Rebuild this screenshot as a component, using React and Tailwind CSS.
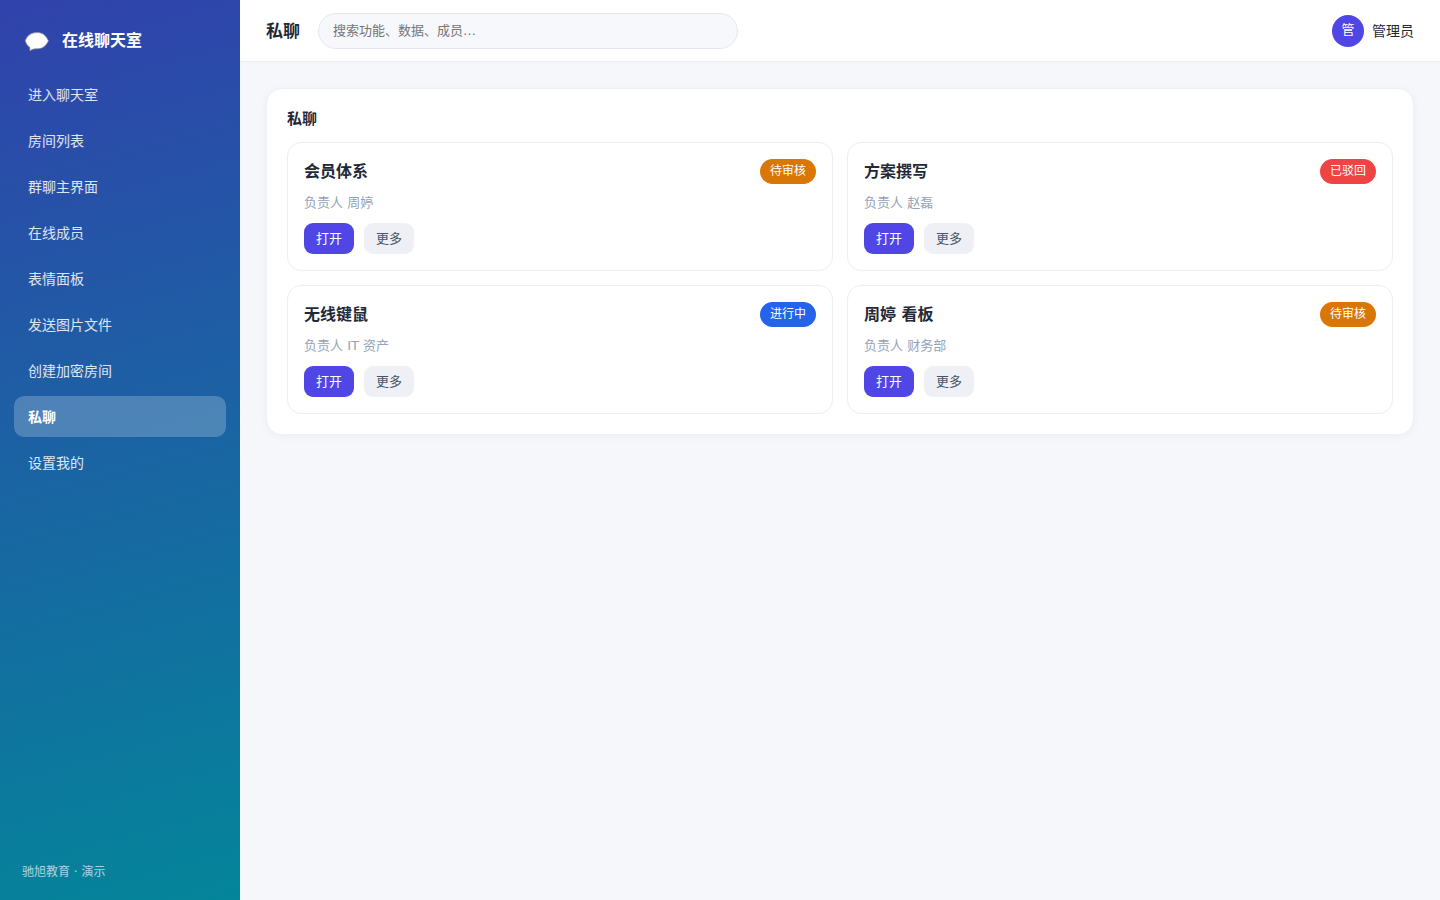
import React from "react";

const navItems = [
  "进入聊天室",
  "房间列表",
  "群聊主界面",
  "在线成员",
  "表情面板",
  "发送图片文件",
  "创建加密房间",
  "私聊",
  "设置我的",
];

const chats = [
  { title: "会员体系", owner: "周婷", status: "待审核" },
  { title: "方案撰写", owner: "赵磊", status: "已驳回" },
  { title: "无线键鼠", owner: "IT 资产", status: "进行中" },
  { title: "周婷 看板", owner: "财务部", status: "待审核" },
];

const statusColors = {
  待审核: "bg-[#d97706]",
  已驳回: "bg-[#ef4444]",
  进行中: "bg-[#2563eb]",
};

function ChatBubbleIcon() {
  return (
    <svg width="26" height="22" viewBox="0 0 26 22" aria-hidden="true">
      <path
        d="M13 2.6C18.2 2.6 21.4 4.6 24.4 10.8C21.8 16.4 18.4 18.8 13 18.8C11.2 18.8 8 18.9 6 20.9L5.8 17.4C3.4 15.8 2.2 13.8 1.2 10.8C3.4 5 7.6 2.6 13 2.6Z"
        fill="#fff"
        stroke="#8a8f98"
        strokeWidth="0.8"
      />
    </svg>
  );
}

function Sidebar({ active }) {
  return (
    <aside className="flex w-60 shrink-0 flex-col bg-[linear-gradient(165deg,#3142ac,#04859a)] px-[14px] pt-[25px] pb-[18px] text-white">
      <div className="flex h-8 items-center gap-3 px-[10px] text-base font-bold">
        <ChatBubbleIcon />
        <span>在线聊天室</span>
      </div>
      <nav className="mt-[17px] flex flex-1 flex-col gap-[5px]">
        {navItems.map((item) => (
          <a
            key={item}
            href="#"
            className={
              item === active
                ? "rounded-[10px] bg-white/22 px-[14px] pt-[11px] pb-[9px] text-sm leading-[21px] font-bold text-white"
                : "rounded-[10px] px-[14px] pt-[11px] pb-[9px] text-sm leading-[21px] text-white/85"
            }
          >
            {item}
          </a>
        ))}
      </nav>
      <div className="px-2 text-xs leading-5 text-white/65">驰旭教育 · 演示</div>
    </aside>
  );
}

function Topbar({ title }) {
  return (
    <header className="flex h-[62px] items-center gap-[18px] border-b border-[#eceef3] bg-white px-[26px]">
      <h1 className="text-[17px] leading-[26px] font-bold">{title}</h1>
      <input
        type="search"
        aria-label="搜索"
        placeholder="搜索功能、数据、成员…"
        className="h-9 w-[420px] rounded-full border border-[#e5e7ef] bg-[#f7f8fc] px-[14px] text-[13px] placeholder:text-[#757575]"
      />
      <div className="ml-auto flex items-center gap-2 text-sm">
        <span className="flex size-8 items-center justify-center rounded-full bg-[#4f46e5] text-[13px] text-white">
          管
        </span>
        <span>管理员</span>
      </div>
    </header>
  );
}

function ChatCard({ chat }) {
  return (
    <article className="rounded-[14px] border border-[#eceef3] p-4">
      <div className="flex items-center justify-between">
        <h3 className="text-base leading-[25px] font-bold">{chat.title}</h3>
        <span
          className={`rounded-full px-[10px] text-xs leading-[25px] text-white ${statusColors[chat.status]}`}
        >
          {chat.status}
        </span>
      </div>
      <p className="mt-2 text-[13px] leading-[21px] text-[#94a3b8]">
        负责人 {chat.owner}
      </p>
      <div className="mt-[10px] flex gap-[10px] text-[13px] leading-[21px]">
        <button type="button" className="rounded-[9px] bg-[#4f46e5] px-3 py-[5px] text-white">
          打开
        </button>
        <button type="button" className="rounded-[9px] bg-[#eef0f5] px-3 py-[5px] text-[#475569]">
          更多
        </button>
      </div>
    </article>
  );
}

export default function App() {
  return (
    <div className="flex min-h-screen bg-[#f5f7fb] font-['DejaVu_Sans','Noto_Sans_CJK_SC',sans-serif] text-[#1f2937]">
      <Sidebar active="私聊" />
      <div className="min-w-0 flex-1">
        <Topbar title="私聊" />
        <main className="p-[26px]">
          <section className="rounded-2xl border border-[#eef0f5] bg-white p-5 shadow-[0_2px_8px_rgba(30,41,90,0.04)]">
            <h2 className="mb-3 text-[15px] leading-[21px] font-bold">私聊</h2>
            <div className="grid grid-cols-2 gap-[14px]">
              {chats.map((chat) => (
                <ChatCard key={chat.title} chat={chat} />
              ))}
            </div>
          </section>
        </main>
      </div>
    </div>
  );
}
